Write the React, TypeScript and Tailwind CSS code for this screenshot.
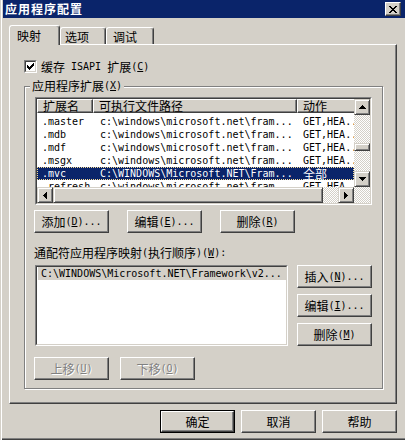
import type { ReactNode } from 'react';

// mixed CJK / latin text: CJK in Noto Sans CJK at 12px, latin runs in a 6px-wide mono.
// "&X" underlines the accelerator letter.
function T({ s }: { s: string }) {
  const parts = s.match(/[\u2e80-\u9fff\uff00-\uffef]+|[^\u2e80-\u9fff\uff00-\uffef]+/g) || [];
  return (
    <>
      {parts.map((p, i) =>
        /[\u2e80-\u9fff\uff00-\uffef]/.test(p) ? (
          <span key={i} className="font-['Noto_Sans_CJK_SC',sans-serif] text-[12px] leading-[12px]">
            {p}
          </span>
        ) : (
          <span key={i} className="font-['DejaVu_Sans_Mono',monospace] text-[10px] leading-[12px] whitespace-pre">
            {p.split(/(&.)/).map((q, j) => (q.startsWith('&') ? <u key={j}>{q[1]}</u> : q))}
          </span>
        )
      )}
    </>
  );
}

function Px({ d, w, h }: { d: string; w: number; h: number }) {
  return (
    <svg width={w} height={h} viewBox={`0 0 ${w} ${h}`} shapeRendering="crispEdges">
      <path d={d} fill="#000" />
    </svg>
  );
}

const UP = 'M3 0h1v1H3z M2 1h3v1H2z M1 2h5v1H1z M0 3h7v1H0z';
const DOWN = 'M0 0h7v1H0z M1 1h5v1H1z M2 2h3v1H2z M3 3h1v1H3z';
const LEFT = 'M3 0h1v7H3z M2 1h1v5H2z M1 2h1v3H1z M0 3h1v1H0z';
const RIGHT = 'M0 0h1v7H0z M1 1h1v5H1z M2 2h1v3H2z M3 3h1v1H3z';
const CHECK = 'M0 2h1v3H0z M1 3h1v3H1z M2 4h1v3H2z M3 3h1v3H3z M4 2h1v3H4z M5 1h1v3H5z M6 0h1v3H6z';
const CLOSE =
  'M0 0h2v1H0z M6 0h2v1H6z M1 1h2v1H1z M5 1h2v1H5z M2 2h4v1H2z M3 3h2v1H3z M2 4h4v1H2z M1 5h2v1H1z M5 5h2v1H5z M0 6h2v1H0z M6 6h2v1H6z';

const dither =
  'bg-[image:repeating-conic-gradient(#d4d0c8_0%_25%,#ffffff_0%_50%)] bg-[length:2px_2px]';

function SBtn({ children }: { children?: ReactNode }) {
  return (
    <div className="flex h-[16px] w-[16px] shrink-0 items-center justify-center border border-t-[#d4d0c8] border-l-[#d4d0c8] border-r-[#404040] border-b-[#404040] bg-[#d4d0c8] shadow-[inset_1px_1px_0_#fff,inset_-1px_-1px_0_#808080]">
      {children}
    </div>
  );
}

function Btn({ s, disabled = false, def = false }: { s: string; disabled?: boolean; def?: boolean }) {
  const bevel = (
    <div className="flex h-full w-full items-center justify-center whitespace-nowrap border border-t-white border-l-white border-r-[#404040] border-b-[#404040] shadow-[inset_-1px_-1px_0_#808080]">
      <span
        className={
          disabled
            ? 'flex h-[12px] items-center text-[#808080] [text-shadow:1px_1px_0_#ffffff]'
            : 'flex h-[12px] items-center text-black'
        }
      >
        <T s={s} />
      </span>
    </div>
  );
  if (def) return <div className="h-[23px] w-[75px] shrink-0 border border-black">{bevel}</div>;
  return <div className="h-[23px] w-[75px] shrink-0">{bevel}</div>;
}

const rows = [
  ['.master', 'c:\\windows\\microsoft.net\\fram...', 'GET,HEA...'],
  ['.mdb', 'c:\\windows\\microsoft.net\\fram...', 'GET,HEA...'],
  ['.mdf', 'c:\\windows\\microsoft.net\\fram...', 'GET,HEA...'],
  ['.msgx', 'c:\\windows\\microsoft.net\\fram...', 'GET,HEA...'],
  ['.mvc', 'C:\\WINDOWS\\Microsoft.NET\\Fram...', '全部'],
  ['.refresh', 'c:\\windows\\microsoft.net\\fram...', 'GET,HEA...'],
];

const headCell =
  'flex h-full shrink-0 items-center whitespace-nowrap border border-t-white border-l-white border-r-[#404040] border-b-[#404040] bg-[#d4d0c8] pl-[5px] shadow-[inset_-1px_-1px_0_#808080]';

export default function App() {
  return (
    <div className="flex h-[440px] w-[405px] flex-col overflow-hidden bg-[#d4d0c8] pl-[3px] text-black shadow-[inset_1px_0_0_#d4d0c8,inset_2px_0_0_#ffffff,inset_0_-1px_0_#404040,inset_0_-2px_0_#808080]">
      {/* title bar */}
      <div className="flex h-[18px] shrink-0 items-center justify-between bg-[#0a246a] pl-[2px] pr-[4px]">
        <span className="font-['Noto_Sans_CJK_SC',sans-serif] text-[12px] font-bold leading-[12px] tracking-[1px] text-white">
          应用程序配置
        </span>
        <div className="flex h-[14px] w-[16px] items-center justify-center border border-t-white border-l-white border-r-[#404040] border-b-[#404040] bg-[#d4d0c8] shadow-[inset_-1px_-1px_0_#808080]">
          <Px d={CLOSE} w={8} h={7} />
        </div>
      </div>

      {/* tabs */}
      <div className="ml-[6px] mt-[7px] flex h-[19px] shrink-0 items-end">
        <div className="relative z-10 -mb-px flex h-[20px] w-[51px] items-start rounded-t-[3px] border-t border-l border-r border-t-white border-l-white border-r-[#404040] bg-[#d4d0c8] pl-[7px] pt-[4px] shadow-[inset_-1px_0_0_#808080]">
          <span className="flex h-[12px] items-center">
            <T s="映射" />
          </span>
        </div>
        <div className="flex h-[17px] w-[46px] items-start rounded-t-[3px] border-t border-l border-r border-t-white border-l-white border-r-[#404040] pl-[4px] pt-[3px] shadow-[inset_-1px_0_0_#808080]">
          <span className="flex h-[12px] items-center">
            <T s="选项" />
          </span>
        </div>
        <div className="flex h-[17px] w-[48px] items-start rounded-t-[3px] border-t border-l border-r border-t-white border-l-white border-r-[#404040] pl-[6px] pt-[3px] shadow-[inset_-1px_0_0_#808080]">
          <span className="flex h-[12px] items-center">
            <T s="调试" />
          </span>
        </div>
      </div>

      {/* tab page */}
      <div className="ml-[6px] flex h-[360px] w-[388px] shrink-0 flex-col border border-t-white border-l-white border-r-[#404040] border-b-[#404040] shadow-[inset_-1px_-1px_0_#808080]">
        <div className="ml-[14px] mt-[15px] flex h-[13px] items-center gap-[4px]">
          <div className="h-[13px] w-[13px] border border-t-[#808080] border-l-[#808080] border-r-white border-b-white">
            <div className="flex h-full w-full items-center justify-center border border-t-[#404040] border-l-[#404040] border-r-[#d4d0c8] border-b-[#d4d0c8] bg-white">
              <Px d={CHECK} w={7} h={7} />
            </div>
          </div>
          <span className="flex h-[12px] items-center whitespace-nowrap">
            <T s="缓存 ISAPI 扩展(&C)" />
          </span>
        </div>

        {/* group box */}
        <div className="ml-[14px] mt-[13px] flex h-[303px] w-[359px] flex-col border border-[#808080] shadow-[inset_1px_1px_0_#fff,1px_1px_0_#fff]">
          <div className="-mt-[7px] ml-[5px] flex h-[12px] items-center self-start whitespace-nowrap bg-[#d4d0c8] px-[2px]">
            <T s="应用程序扩展(&X)" />
          </div>

          {/* list view */}
          <div className="ml-[10px] mt-[5px] h-[108px] w-[337px] shrink-0 border border-t-[#808080] border-l-[#808080] border-r-white border-b-white">
            <div className="flex h-full w-full flex-col border border-t-[#404040] border-l-[#404040] border-r-[#d4d0c8] border-b-[#d4d0c8] bg-white">
              <div className="flex h-[88px] shrink-0">
                <div className="flex w-[317px] flex-col overflow-hidden">
                  <div className="flex h-[14px] shrink-0">
                    <div className={`${headCell} w-[56px]`}>
                      <T s="扩展名" />
                    </div>
                    <div className={`${headCell} w-[204px]`}>
                      <T s="可执行文件路径" />
                    </div>
                    <div className={`${headCell} w-[70px]`}>
                      <T s="动作" />
                    </div>
                  </div>
                  <div className="flex flex-col pt-[2px]">
                    {rows.map(([ext, path, verb], i) => (
                      <div
                        key={ext}
                        className={
                          i === 4
                            ? 'flex h-[13px] shrink-0 items-center whitespace-nowrap border border-dotted border-[#f5db95] bg-[#0a246a] text-white'
                            : 'flex h-[13px] shrink-0 items-center whitespace-nowrap border border-transparent'
                        }
                      >
                        <div className="flex w-[55px] shrink-0 items-center pl-[4px]">
                          <T s={ext} />
                        </div>
                        <div className="flex w-[204px] shrink-0 items-center pl-[7px]">
                          <T s={path} />
                        </div>
                        <div className="flex w-[60px] shrink-0 items-center pl-[6px]">
                          <T s={verb} />
                        </div>
                      </div>
                    ))}
                  </div>
                </div>
                {/* vertical scrollbar */}
                <div className="flex w-[16px] flex-col">
                  <SBtn>
                    <Px d={UP} w={7} h={4} />
                  </SBtn>
                  <div className={`flex flex-1 flex-col ${dither}`}>
                    <div className="mt-[28px] h-[8px] w-[16px] border border-t-[#d4d0c8] border-l-[#d4d0c8] border-r-[#404040] border-b-[#404040] bg-[#d4d0c8] shadow-[inset_1px_1px_0_#fff,inset_-1px_-1px_0_#808080]" />
                  </div>
                  <SBtn>
                    <Px d={DOWN} w={7} h={4} />
                  </SBtn>
                </div>
              </div>
              {/* horizontal scrollbar */}
              <div className="flex h-[16px] shrink-0">
                <SBtn>
                  <Px d={LEFT} w={4} h={7} />
                </SBtn>
                <div className="h-[16px] w-[270px] border border-t-[#d4d0c8] border-l-[#d4d0c8] border-r-[#404040] border-b-[#404040] bg-[#d4d0c8] shadow-[inset_1px_1px_0_#fff,inset_-1px_-1px_0_#808080]" />
                <div className={`flex-1 ${dither}`} />
                <SBtn>
                  <Px d={RIGHT} w={4} h={7} />
                </SBtn>
                <div className={`w-[16px] ${dither}`} />
              </div>
            </div>
          </div>

          <div className="ml-[9px] mt-[5px] flex gap-[18px]">
            <Btn s="添加(&D)..." />
            <Btn s="编辑(&E)..." />
            <Btn s="删除(&R)" />
          </div>

          <div className="ml-[9px] mt-[14px] flex h-[12px] items-center whitespace-nowrap">
            <T s="通配符应用程序映射(执行顺序)(&W):" />
          </div>

          <div className="mt-[6px] flex">
            <div className="ml-[10px] h-[81px] w-[253px] border border-t-[#808080] border-l-[#808080] border-r-white border-b-white">
              <div className="h-full w-full border border-t-[#404040] border-l-[#404040] border-r-[#d4d0c8] border-b-[#d4d0c8] bg-white">
                <div className="ml-px flex h-[13px] items-center whitespace-nowrap bg-[#d4d0c8] pl-[3px]">
                  <T s="C:\WINDOWS\Microsoft.NET\Framework\v2..." />
                </div>
              </div>
            </div>
            <div className="ml-[9px] flex flex-col gap-[6px]">
              <Btn s="插入(&N)..." />
              <Btn s="编辑(&I)..." />
              <Btn s="删除(&M)" />
            </div>
          </div>

          <div className="ml-[9px] mt-[11px] flex gap-[11px]">
            <Btn s="上移(&U)" disabled />
            <Btn s="下移(&O)" disabled />
          </div>
        </div>
      </div>

      {/* dialog buttons */}
      <div className="mt-[6px] flex justify-end gap-[6px] pr-[8px]">
        <Btn s="确定" def />
        <Btn s="取消" />
        <Btn s="帮助" />
      </div>
    </div>
  );
}
